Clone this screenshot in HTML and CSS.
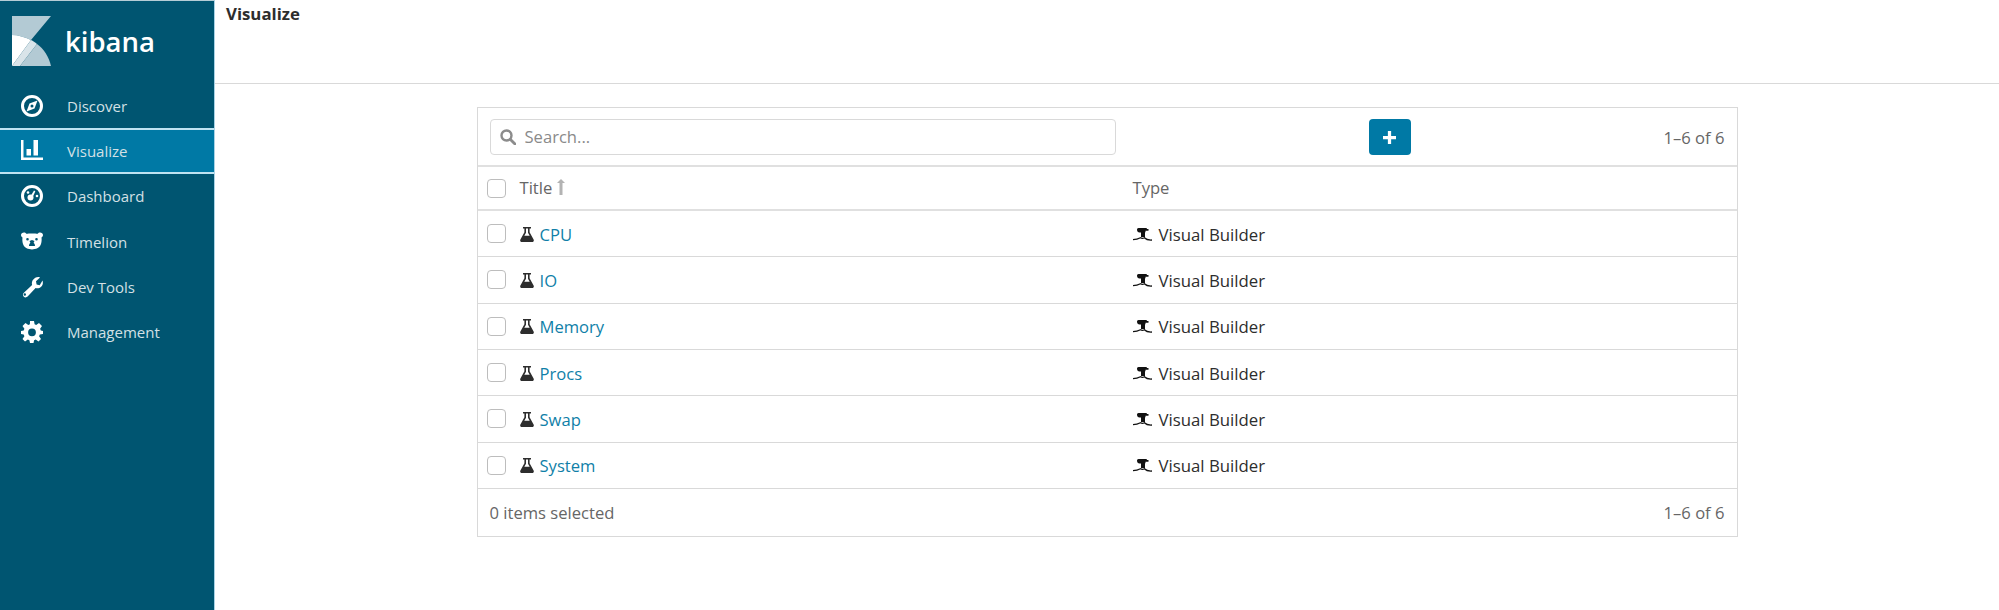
FILE: index.html
```html
<!DOCTYPE html>
<html lang="en">
<head>
  <meta charset="UTF-8">
  <title>Visualize - Kibana</title>
  <link rel="stylesheet" href="styles.css">
</head>
<body>
  <aside class="sidebar">
    <div class="brand">
      <svg class="brand-mark" viewBox="0 0 39 50" width="39" height="50">
        <path fill="#b3cad4" d="M0 0H39L19 24C13 21 6 19 0 19Z"/>
        <path fill="#fff" d="M0 19C6 19 13 21 19 24L0 50Z"/>
        <path fill="#d9e4e9" d="M19 24C21 25 23 26 25 28L8 50H0Z"/>
        <path fill="#b3cad4" d="M25 28C32 33 37 41 39 50H8Z"/>
      </svg>
      <span class="brand-name">kibana</span>
    </div>
    <nav class="nav">
      <a class="nav-item" href="#">
        <svg class="nav-icon" viewBox="0 0 22 22"><circle cx="11" cy="11" r="9.500" fill="none" stroke="#fff" stroke-width="3"/><path fill="#fff" d="M16.500 5.500l-3 8-8 3 3-8zM11 9.500a1.500 1.500 0 1 0 0 3 1.500 1.500 0 0 0 0-3z" fill-rule="evenodd"/></svg>
        Discover
      </a>
      <a class="nav-item active" href="#">
        <svg class="nav-icon" viewBox="0 0 22 22"><path fill="#fff" d="M0 0h2.500v17.500H22V20H0zM5.500 9H10v6.500H5.500zM12.500 0H17v15.500h-4.500z"/></svg>
        Visualize
      </a>
      <a class="nav-item" href="#">
        <svg class="nav-icon" viewBox="0 0 22 22"><circle cx="11" cy="11" r="9.500" fill="none" stroke="#fff" stroke-width="3"/><circle cx="9.500" cy="12.500" r="3" fill="#fff"/><path fill="#fff" d="M10 10.500l3-5 1.300.7-2.300 5.300z"/><circle cx="16" cy="11" r="1.300" fill="#fff"/><circle cx="7" cy="7.500" r="1.300" fill="#fff"/></svg>
        Dashboard
      </a>
      <a class="nav-item" href="#">
        <svg class="nav-icon" viewBox="0 0 22 22"><path fill="#fff" fill-rule="evenodd" d="M0 4c0-1.500 1.300-2.500 3-2.500 1 0 1.700.5 2.300 1.200C8 2.300 14 2.300 16.700 2.700c.6-.7 1.300-1.200 2.300-1.200 1.700 0 3 1 3 2.500 0 1.200-.7 2-1.500 2.500.3 2.300.2 4.700-.8 7.300-1.100 2.800-5 4.700-8.700 4.700s-7.600-1.900-8.700-4.700C1.300 11.200 1.200 8.800 1.500 6.500.7 6 0 5.200 0 4zM6.500 7a1.300 1.300 0 1 0 0 2.600 1.300 1.300 0 0 0 0-2.600zM15.500 7a1.300 1.300 0 1 0 0 2.600 1.300 1.300 0 0 0 0-2.600zM8.500 10L11 9l2.500 1-.9 1.700c1 .8 1.400 1.900 1.400 3.300H8c0-1.400.4-2.500 1.400-3.300z"/></svg>
        Timelion
      </a>
      <a class="nav-item" href="#">
        <svg class="nav-icon" viewBox="0 0 22 22"><path fill="#fff" fill-rule="evenodd" d="M21.500 4.500c.8 2.300.3 4.700-1.400 6.300-1.500 1.400-3.600 1.900-5.500 1.300l-8 8.500c-1 1-2.800 1.100-3.800.2-1.100-1-1.200-2.800-.2-3.900l8.500-8c-.6-2 0-4.200 1.500-5.600C14.500 1.200 16.800.6 19 1.400l-4 3.900.6 3.200 3.100.7zM3.800 17.300a1.200 1.200 0 1 0 0 2.400 1.200 1.200 0 0 0 0-2.400z"/></svg>
        Dev Tools
      </a>
      <a class="nav-item" href="#">
        <svg class="nav-icon" viewBox="0 0 22 22"><path fill="#fff" fill-rule="evenodd" d="M9 0h4l.6 3.200 1.600.7L18 2l3 3-1.900 2.800.7 1.600L22 10v3l-3.200.6-.7 1.600L20 18l-2.500 2.500-2.800-1.900-1.600.7L12.500 22h-3.500l-.6-2.700-1.600-.7L4 20.500 1.500 18l1.900-2.800-.7-1.600L0 13v-3l2.700-.6.7-1.600L1.500 5l3-3 2.800 1.900 1.600-.7zM11 7.400a3.900 3.900 0 1 0 0 7.800 3.900 3.900 0 0 0 0-7.800z"/></svg>
        Management
      </a>
    </nav>
  </aside>

  <main class="content">
    <header class="top-bar">
      <h1 class="page-title">Visualize</h1>
    </header>

    <section class="panel">
      <div class="toolbar">
        <label class="search">
          <svg class="search-icon" viewBox="0 0 16 16" width="16" height="16"><circle cx="6.500" cy="6.500" r="5" fill="none" stroke="#8c8c8c" stroke-width="2.400"/><path d="M10.200 10.200L15 15" stroke="#8c8c8c" stroke-width="2.800" stroke-linecap="round"/></svg>
          <input class="search-input" type="text" placeholder="Search...">
        </label>
        <button class="add-button" type="button">
          <svg viewBox="0 0 12 12" width="13" height="13"><path fill="#fff" d="M4.500 0h3v4.500H12v3H7.500V12h-3V7.500H0v-3h4.500z"/></svg>
        </button>
        <span class="count">1–6 of 6</span>
      </div>

      <div class="row head-row">
        <span class="check"></span>
        <span class="title-cell">Title
          <svg class="sort-icon" viewBox="0 0 8 16" width="8" height="16"><path fill="#b3b3b3" d="M4 0L8 4H5.500V16h-3V4H0z"/></svg>
        </span>
        <span class="type-cell">Type</span>
      </div>

      <div class="row">
        <span class="check"></span>
        <span class="title-cell"><svg class="flask" viewBox="0 0 14 15"><use href="#flask"/></svg><a href="#">CPU</a></span>
        <span class="type-cell"><svg class="builder" viewBox="0 0 19 13"><use href="#builder"/></svg>Visual Builder</span>
      </div>
      <div class="row">
        <span class="check"></span>
        <span class="title-cell"><svg class="flask" viewBox="0 0 14 15"><use href="#flask"/></svg><a href="#">IO</a></span>
        <span class="type-cell"><svg class="builder" viewBox="0 0 19 13"><use href="#builder"/></svg>Visual Builder</span>
      </div>
      <div class="row">
        <span class="check"></span>
        <span class="title-cell"><svg class="flask" viewBox="0 0 14 15"><use href="#flask"/></svg><a href="#">Memory</a></span>
        <span class="type-cell"><svg class="builder" viewBox="0 0 19 13"><use href="#builder"/></svg>Visual Builder</span>
      </div>
      <div class="row">
        <span class="check"></span>
        <span class="title-cell"><svg class="flask" viewBox="0 0 14 15"><use href="#flask"/></svg><a href="#">Procs</a></span>
        <span class="type-cell"><svg class="builder" viewBox="0 0 19 13"><use href="#builder"/></svg>Visual Builder</span>
      </div>
      <div class="row">
        <span class="check"></span>
        <span class="title-cell"><svg class="flask" viewBox="0 0 14 15"><use href="#flask"/></svg><a href="#">Swap</a></span>
        <span class="type-cell"><svg class="builder" viewBox="0 0 19 13"><use href="#builder"/></svg>Visual Builder</span>
      </div>
      <div class="row">
        <span class="check"></span>
        <span class="title-cell"><svg class="flask" viewBox="0 0 14 15"><use href="#flask"/></svg><a href="#">System</a></span>
        <span class="type-cell"><svg class="builder" viewBox="0 0 19 13"><use href="#builder"/></svg>Visual Builder</span>
      </div>

      <div class="footer-row">
        <span>0 items selected</span>
        <span>1–6 of 6</span>
      </div>
    </section>
  </main>

  <!-- shared row icons -->
  <svg class="icon-defs" width="0" height="0">
    <symbol id="flask" viewBox="0 0 14 15">
      <path fill="#2d2d2d" fill-rule="evenodd" d="M3 0h8v1.500H9.600v3.700l4 7.300c.6 1.200 0 2.500-1.300 2.500H1.700C.4 15-.2 13.700.4 12.500l4-7.300V1.500H3zM6 1.500v4.200L4.300 8.800h5.400L8 5.700V1.500z"/>
    </symbol>
    <symbol id="builder" viewBox="0 0 19 13">
      <path fill="#111" d="M5.500 0h8l.5 1h1.500v1.800H12.500v1.400h-.5v4.800H8V4.500H6.500C5 4.500 4 3.200 4 1.800 4 .8 4.600 0 5.500 0z"/>
      <path fill="none" stroke="#111" stroke-width="1.300" d="M0 11.700c3 0 5.500-.8 7.500-1.900 1.300.7 2.500.8 3.800-.1 2 2 4.500 2.500 7.700 2.300"/>
    </symbol>
  </svg>
</body>
</html>
```

FILE: styles.css
```css
* {
  box-sizing: border-box;
}
body {
  display: flex;
  min-height: 610px;
  margin: 0;
  background-color: #fff;
  color: #2d2d2d;
  font-family: "Open Sans", "Noto Sans", sans-serif;
  font-size: 16.6px;
}
a {
  text-decoration: none;
}

/* sidebar */
.sidebar {
  flex: 0 0 215px;
  background-color: #005571;
  border-top: 1px solid #b5cdd6;
  border-right: 1px solid #a9d3e6;
}
.brand {
  display: flex;
  align-items: center;
  height: 82px;
  padding: 0 0 3px 12px;
}
.brand-name {
  margin: 2px 0 0 14px;
  color: #fff;
  font-size: 27.5px;
  font-weight: 600;
  line-height: 1;
}
.nav-item {
  display: flex;
  align-items: center;
  height: 45.33px;
  padding-left: 21px;
  color: #d3e0e5;
  font-size: 15px;
}
.nav-item.active {
  background-color: #0079a5;
  border-top: 2px solid #bfe3f2;
  border-bottom: 2px solid #bfe3f2;
}
.nav-icon {
  width: 22px;
  height: 22px;
  margin-right: 24px;
}

/* top bar */
.content {
  flex: 1;
  min-width: 0;
}
.top-bar {
  height: 84px;
  border-bottom: 1px solid #d9d9d9;
}
.page-title {
  margin: 0;
  padding: 3px 0 0 11px;
  font-size: 16.8px;
  font-weight: 700;
  line-height: 22px;
}

/* table panel */
.panel {
  width: 1261px;
  margin: 23px auto 0;
  border: 1px solid #d9d9d9;
}
.toolbar {
  display: flex;
  align-items: center;
  justify-content: space-between;
  height: 59px;
  padding: 1px 12px 0 12px;
  border-bottom: 2px solid #e0e0e0;
}
.search {
  display: flex;
  align-items: center;
  width: 626px;
  height: 36px;
  padding-left: 9px;
  border: 1px solid #d9d9d9;
  border-radius: 4px;
}
.search-icon {
  flex: none;
  margin-right: 7px;
}
.search-input {
  flex: 1;
  padding-bottom: 2px;
  border: none;
  outline: none;
  font-family: inherit;
  font-size: 16.6px;
}
.search-input::placeholder {
  color: #8a8a8a;
  opacity: 1;
}
.add-button {
  display: flex;
  align-items: center;
  justify-content: center;
  width: 42px;
  height: 36px;
  border: none;
  border-radius: 4px;
  background-color: #0079a5;
}
.count {
  color: #666;
}

.row {
  display: flex;
  align-items: center;
  height: 46.33px;
  padding-left: 9px;
  border-bottom: 1px solid #d9d9d9;
}
.head-row {
  height: 44px;
  border-bottom-width: 2px;
  border-bottom-color: #e0e0e0;
  color: #666;
}
.check {
  flex: none;
  width: 19px;
  height: 19px;
  border: 1px solid #bdbdbd;
  border-radius: 4px;
}
.title-cell {
  display: flex;
  align-items: center;
  width: 627px;
  padding: 1px 0 0 14px;
}
.type-cell {
  display: flex;
  align-items: center;
  padding-top: 1px;
  font-size: 16.8px;
}
.head-row .title-cell,
.head-row .type-cell {
  padding-top: 0;
  padding-bottom: 2px;
  font-size: 16.6px;
}
.title-cell a {
  color: #107fa8;
}
.sort-icon {
  margin-left: 5px;
}
.flask {
  width: 14px;
  height: 15px;
  margin-right: 6px;
}
.builder {
  width: 19px;
  height: 13px;
  margin-right: 7px;
}
.footer-row {
  display: flex;
  align-items: center;
  justify-content: space-between;
  height: 47px;
  padding: 1px 12px 0;
  color: #666;
}
.icon-defs {
  position: absolute;
}
```
